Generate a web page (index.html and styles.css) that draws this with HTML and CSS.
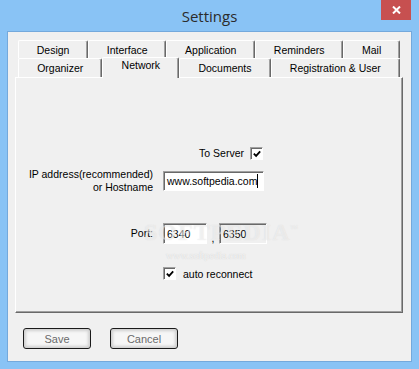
FILE: index.html
```html
<!DOCTYPE html>
<html lang="en">
<head>
  <meta charset="UTF-8">
  <title>Settings</title>
  <link rel="stylesheet" href="styles.css">
</head>
<body>
  <div class="window">
    <div class="titlebar">
      <span></span>
      <h1 class="title">Settings</h1>
      <button class="close" type="button" aria-label="Close">
        <svg width="9" height="8" viewBox="0 0 9 8"><path d="M1 0.5 L8 7.5 M8 0.5 L1 7.5" stroke="#fff" stroke-width="2"/></svg>
      </button>
    </div>

    <div class="client">
      <div class="tabs">
        <div class="tab-row back">
          <div class="tab">Design</div>
          <div class="tab">Interface</div>
          <div class="tab">Application</div>
          <div class="tab">Reminders</div>
          <div class="tab">Mail</div>
        </div>
        <div class="tab-row front">
          <div class="tab">Organizer</div>
          <div class="tab active">Network</div>
          <div class="tab">Documents</div>
          <div class="tab">Registration &amp; User</div>
        </div>
      </div>

      <div class="panel">
        <div class="form">
          <div class="server-row">
            <span>To Server</span>
            <span class="check">
              <svg width="11" height="11" viewBox="0 0 11 11"><path d="M2 4.5 L4.5 7 L9 2" stroke="#000" stroke-width="2" fill="none"/></svg>
            </span>
          </div>

          <label class="label host-label">IP address(recommended)<br>or Hostname</label>
          <div class="field host-field"><span class="value">www.softpedia.com</span><span class="caret"></span></div>

          <label class="label port-label">Port:</label>
          <div class="port-row">
            <div class="field port">6340</div>
            <span class="comma">,</span>
            <div class="field port disabled">6350</div>
          </div>

          <div class="reconnect-row">
            <span class="check">
              <svg width="11" height="11" viewBox="0 0 11 11"><path d="M2 4.5 L4.5 7 L9 2" stroke="#000" stroke-width="2" fill="none"/></svg>
            </span>
            <span>auto reconnect</span>
          </div>
        </div>

        <div class="watermark">SOFTPEDIA<sup>™</sup></div>
        <div class="watermark-url">www.softpedia.com</div>
      </div>

      <div class="buttons">
        <button class="btn" type="button">Save</button>
        <button class="btn" type="button">Cancel</button>
      </div>
    </div>
  </div>
</body>
</html>
```

FILE: styles.css
```css
* {
  margin: 0;
  padding: 0;
  box-sizing: border-box;
}

body {
  width: 419px;
  height: 369px;
  background: #89c3f5;
  font-family: "Liberation Sans", Arial, sans-serif;
  font-size: 10.5px;
  color: #000;
  overflow: hidden;
}

.window {
  display: flex;
  flex-direction: column;
  height: 369px;
}

/* title bar */
.titlebar {
  height: 31px;
  display: grid;
  grid-template-columns: 1fr auto 1fr;
}

.title {
  font-family: "Open Sans", "Noto Sans", sans-serif;
  font-weight: 400;
  font-size: 15px;
  color: #2b2b2b;
  line-height: 31px;
  padding-top: 1px;
}

.close {
  justify-self: end;
  align-self: start;
  width: 30px;
  height: 20px;
  margin-right: 8px;
  background: #c75050;
  border: none;
  display: flex;
  align-items: center;
  justify-content: center;
}

/* client area */
.client {
  flex: 1;
  margin: 0 7px 7px;
  background: #f0f0f0;
  border: 1px solid #74a9dc;
  padding: 8px 8px 0 7px;
}

.tabs {
  padding: 0 3px;
  position: relative;
  z-index: 1;
  margin-bottom: -1px;
}

.tab-row {
  display: flex;
}

.tab-row.back {
  height: 18px;
}

.tab-row.front {
  height: 20px;
}

.tab {
  flex: auto;
  padding: 0 6px;
  text-align: center;
  line-height: 18px;
  background: #f0f0f0;
  border-top: 1px solid #fff;
  border-left: 1px solid #fff;
  border-right: 1px solid #696969;
  box-shadow: inset -1px 0 0 #a0a0a0;
  border-radius: 2px 2px 0 0;
  white-space: nowrap;
}

.tab-row.front .tab {
  height: 19px;
}

.tab.active {
  height: 21px !important;
  margin-top: -1px;
  line-height: 15px;
  position: relative;
  z-index: 2;
}

/* page */
.panel {
  position: relative;
  height: 236px;
  border-top: 1px solid #fff;
  border-left: 1px solid #fff;
  border-right: 1px solid #696969;
  border-bottom: 1px solid #696969;
  box-shadow: inset -1px -1px 0 #a0a0a0;
  padding-top: 69px;
}

.form {
  display: grid;
  grid-template-columns: 137px 101px;
  column-gap: 10px;
  align-items: center;
}

.server-row {
  grid-column: 2;
  display: flex;
  justify-content: flex-end;
  align-items: flex-end;
  gap: 6px;
  height: 13px;
  line-height: 13px;
  padding-right: 1px;
}

.label {
  grid-column: 1;
  text-align: right;
  line-height: 13px;
  white-space: nowrap;
}

.host-field,
.port-row {
  grid-column: 2;
}

.host-label,
.host-field {
  margin-top: 8px;
}

.field {
  height: 20px;
  background: #fff;
  border: 1px solid;
  border-color: #a0a0a0 #fff #fff #a0a0a0;
  box-shadow: inset 1px 1px 0 #696969;
  padding: 2px 3px;
  line-height: 14px;
  white-space: nowrap;
  display: flex;
  align-items: flex-start;
  overflow: hidden;
}

.caret {
  display: inline-block;
  flex: none;
  width: 1px;
  height: 14px;
  background: #000;
}

.port-label,
.port-row {
  margin-top: 29px;
}

.port-row {
  display: flex;
  align-items: flex-end;
  width: 104px;
}

.field.port {
  flex: none;
  height: 21px;
  width: 44px;
  padding-top: 3px;
}

.field.port.disabled {
  width: 48px;
  background: #f0f0f0;
}

.comma {
  width: 12px;
  text-align: center;
  line-height: 12px;
}

.reconnect-row {
  grid-column: 2;
  display: flex;
  align-items: center;
  gap: 7px;
  margin-top: 23px;
  white-space: nowrap;
}

.check {
  width: 13px;
  height: 13px;
  flex: none;
  background: #fff;
  border: 1px solid;
  border-color: #a0a0a0 #fff #fff #a0a0a0;
  box-shadow: inset 1px 1px 0 #696969;
  display: flex;
  align-items: center;
  justify-content: center;
  padding: 1px 0 0 1px;
}

/* faint watermark over the page */
.watermark {
  position: absolute;
  left: 128px;
  top: 141px;
  font-family: "Liberation Serif", serif;
  font-weight: 700;
  font-size: 24px;
  letter-spacing: 1px;
  color: rgba(255, 255, 255, 0.45);
  text-shadow: 0 0 1px rgba(150, 150, 150, 0.25);
  pointer-events: none;
}

.watermark sup {
  font-size: 8px;
}

.watermark-url {
  position: absolute;
  left: 150px;
  top: 172px;
  font-family: "Liberation Serif", serif;
  font-size: 10px;
  color: rgba(255, 255, 255, 0.7);
  text-shadow: 0 0 1px rgba(140, 140, 140, 0.4);
  pointer-events: none;
}

/* bottom buttons */
.buttons {
  display: flex;
  gap: 19px;
  margin: 15px 0 0 8px;
}

.btn {
  width: 68px;
  height: 21px;
  border: 1px solid #1a1a1a;
  border-radius: 3px;
  background: #f6f6f6;
  box-shadow: inset 0 0 3px 2px #cfcfcf;
  font-family: "Liberation Sans", Arial, sans-serif;
  font-size: 11px;
  color: #6a6a6a;
}
```
